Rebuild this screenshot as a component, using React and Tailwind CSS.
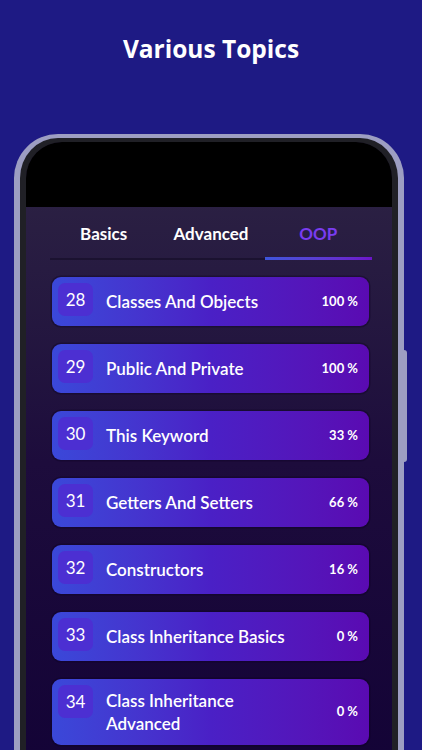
const topics = [
  { id: 28, title: 'Classes And Objects', progress: 100 },
  { id: 29, title: 'Public And Private', progress: 100 },
  { id: 30, title: 'This Keyword', progress: 33 },
  { id: 31, title: 'Getters And Setters', progress: 66 },
  { id: 32, title: 'Constructors', progress: 16 },
  { id: 33, title: 'Class Inheritance Basics', progress: 0 },
  { id: 34, title: 'Class Inheritance Advanced', progress: 0 },
];

const tabs = ['Basics', 'Advanced', 'OOP'];

function TopicCard({ topic }) {
  return (
    <div className="flex min-h-[49px] items-center rounded-[9px] bg-gradient-to-r from-[#3a48d9] via-[#4a20c6] to-[#5a0ab2] py-[10px] pl-[6px] pr-[11px] shadow-[0_0_0_1.5px_rgba(12,4,32,0.35)]">
      <div className="-mt-[4px] flex h-[33px] w-[35px] shrink-0 self-start items-center justify-center rounded-[7px] bg-[#4c2fd2] text-[17px] leading-none text-white">
        {topic.id}
      </div>
      <div className="ml-[13px] flex-1">
        <p className="max-w-[185px] text-[17px] font-semibold leading-[23px] text-white">{topic.title}</p>
      </div>
      <span className="shrink-0 text-[13px] font-bold text-white">{topic.progress} %</span>
    </div>
  );
}

function App() {
  const activeTab = 'OOP';

  return (
    <div className="h-[750px] w-[422px] overflow-hidden bg-[#1e1a84] font-['Lato',sans-serif]">
      <h1 className="pt-[33px] text-center font-['Open_Sans',sans-serif] text-[24.5px] font-bold leading-[32px] text-white">
        Various Topics
      </h1>

      <div className="relative ml-[14px] mt-[69px] w-[390px] rounded-t-[44px] border-x-[6px] border-t-[4px] border-[#9d9ec2] bg-[#202026] px-[6px] pt-[4px]">
        <div className="absolute right-[-9px] top-[212px] h-[112px] w-[3px] rounded-r-sm bg-[#9d9ec2]" />

        <div className="h-[640px] overflow-hidden rounded-t-[36px] bg-gradient-to-b from-[#2e2444] via-[#1d0c3c] to-[#130336]">
          <div className="h-[65px] bg-black" />

          <div className="ml-[24px] mr-[20px] flex border-b-[2px] border-[#1b1230] pt-[16px]">
            {tabs.map((tab) => (
              <div key={tab} className="flex flex-1 flex-col items-center">
                <span
                  className={
                    tab === activeTab
                      ? 'text-[17px] font-bold leading-[22px] text-[#7a3cf0]'
                      : 'text-[17px] font-bold leading-[22px] text-white'
                  }
                >
                  {tab}
                </span>
                <div
                  className={
                    tab === activeTab
                      ? '-mb-[2px] mt-[12px] h-[3px] w-full bg-gradient-to-r from-[#3d55db] to-[#6c14c9]'
                      : '-mb-[2px] mt-[12px] h-[3px] w-full'
                  }
                />
              </div>
            ))}
          </div>

          <div className="ml-[26px] mr-[23px] flex flex-col gap-[18px] pt-[17px]">
            {topics.map((topic) => (
              <TopicCard key={topic.id} topic={topic} />
            ))}
          </div>
        </div>
      </div>
    </div>
  );
}

export default App;
